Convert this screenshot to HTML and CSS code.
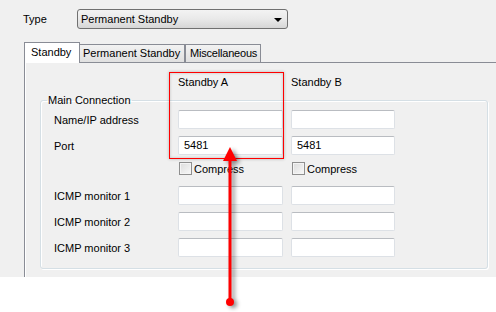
FILE: index.html
```html
<!doctype html>
<html lang="en">

<head>
    <meta charset="UTF-8">
    <title>Standby Settings</title>
    <link rel="stylesheet" href="styles.css">
</head>

<body>
    <div class="window">
        <div class="type-row">
            <span class="type-label">Type</span>
            <div class="combo">
                <span>Permanent Standby</span>
                <span class="combo-arrow"></span>
            </div>
        </div>

        <div class="tabs">
            <div class="tab active">Standby</div>
            <div class="tab tab-perm">Permanent Standby</div>
            <div class="tab tab-misc">Miscellaneous</div>
        </div>

        <div class="panel">
            <div class="headings">
                <span class="heading">Standby A</span>
                <span class="heading">Standby B</span>
            </div>

            <fieldset class="group">
                <legend>Main Connection</legend>
                <div class="grid">
                    <span class="label">Name/IP address</span>
                    <div class="field"></div>
                    <div class="field"></div>

                    <span class="label">Port</span>
                    <div class="field">5481</div>
                    <div class="field">5481</div>

                    <span></span>
                    <label class="check"><span class="box"></span>Compress</label>
                    <label class="check"><span class="box"></span>Compress</label>

                    <span class="label">ICMP monitor 1</span>
                    <div class="field"></div>
                    <div class="field"></div>

                    <span class="label">ICMP monitor 2</span>
                    <div class="field"></div>
                    <div class="field"></div>

                    <span class="label">ICMP monitor 3</span>
                    <div class="field"></div>
                    <div class="field"></div>
                </div>
            </fieldset>
        </div>
    </div>

    <!-- annotation overlay -->
    <div class="highlight"></div>
    <svg class="arrow" width="496" height="312" viewBox="0 0 496 312">
        <line x1="230" y1="158" x2="230" y2="302" stroke="#ff0000" stroke-width="3" />
        <polygon points="223,161 237,161 230,147" fill="#ff0000" />
        <circle cx="230" cy="302" r="4" fill="#ff0000" />
    </svg>
</body>

</html>
```

FILE: styles.css
```css
body {
    margin: 0;
    background-color: #ffffff;
    font-family: 'Liberation Sans', Arial, sans-serif;
    font-size: 11px;
    color: #000;
    position: relative;
    width: 496px;
    height: 312px;
    overflow: hidden;
}

.window {
    background-color: #f0f0f0;
    height: 277px;
    overflow: hidden;
}

.type-row {
    display: flex;
    align-items: center;
    padding: 9px 0 0 23px;
}

.type-label {
    width: 54px;
}

.combo {
    width: 211px;
    height: 20px;
    box-sizing: border-box;
    border: 1px solid #707070;
    border-radius: 3px;
    background: linear-gradient(#f3f3f3, #e9e9e9 50%, #d6d6d6);
    display: flex;
    align-items: center;
    justify-content: space-between;
    padding: 0 5px 0 3px;
}

.combo-arrow {
    width: 0;
    height: 0;
    border-left: 4px solid transparent;
    border-right: 4px solid transparent;
    border-top: 4px solid #000;
    margin-top: 1px;
}

.tabs {
    display: flex;
    align-items: flex-end;
    margin: 13px 0 0 24px;
    height: 20px;
    position: relative;
    z-index: 1;
}

.tab {
    height: 18px;
    box-sizing: border-box;
    border: 1px solid #898c95;
    border-bottom: none;
    background: linear-gradient(#f2f2f2, #e0e0e0);
    padding: 2px 0 0 3px;
    white-space: nowrap;
}

.tab.active {
    width: 56px;
    height: 21px;
    margin-bottom: -1px;
    background: #fff;
    padding: 3px 0 0 6px;
    position: relative;
    z-index: 2;
}

.tab-perm {
    width: 105px;
    border-left: none;
}

.tab-misc {
    width: 76px;
    padding-left: 4px;
    letter-spacing: -0.2px;
}

.panel {
    margin-left: 24px;
    border-top: 1px solid #898c95;
    border-left: 1px solid #898c95;
    height: 215px;
    padding-top: 13px;
    box-sizing: border-box;
    box-shadow: inset 1px 0 0 #ffffff;
}

.headings {
    display: flex;
    height: 13px;
    line-height: 13px;
    padding-left: 153px;
}

.heading {
    width: 113px;
}

.group {
    margin: 4px 0 0 15px;
    width: 448px;
    box-sizing: border-box;
    border: 1px solid #d5dfe5;
    border-radius: 3px;
    box-shadow: 1px 1px 0 #ffffff, inset 1px 1px 0 #ffffff;
    padding: 3px 0 11px 13px;
    min-width: 0;
}

.group legend {
    padding: 0 1px;
    margin-left: -7px;
    line-height: 14px;
}

.grid {
    display: grid;
    grid-template-columns: 116px 105px 104px;
    grid-template-rows: 19px 19px 17px 19px 19px 19px;
    column-gap: 8px;
    row-gap: 7px;
    align-items: center;
}

.field {
    height: 19px;
    box-sizing: border-box;
    background: #fff;
    border: 1px solid #dde1e6;
    border-top-color: #b9bcc1;
    border-radius: 2px;
    padding: 0 5px;
    line-height: 17px;
}

.check {
    display: flex;
    align-items: center;
    align-self: start;
    padding-left: 1px;
}

.box {
    width: 13px;
    height: 13px;
    box-sizing: border-box;
    border: 1px solid #8f8f8f;
    background: linear-gradient(135deg, #dcdcdc, #f8f8f8);
    box-shadow: inset 0 0 0 1px #f4f4f4;
    margin-right: 2px;
}

.highlight {
    position: absolute;
    left: 169px;
    top: 72px;
    width: 115px;
    height: 87px;
    box-sizing: border-box;
    border: 1px solid #ff0000;
    box-shadow: 0 0 3px rgba(0, 0, 0, 0.25), inset 0 0 3px rgba(0, 0, 0, 0.2);
}

.arrow {
    position: absolute;
    left: 0;
    top: 0;
    pointer-events: none;
    filter: drop-shadow(3px 2px 2px rgba(0, 0, 0, 0.45));
}
```
